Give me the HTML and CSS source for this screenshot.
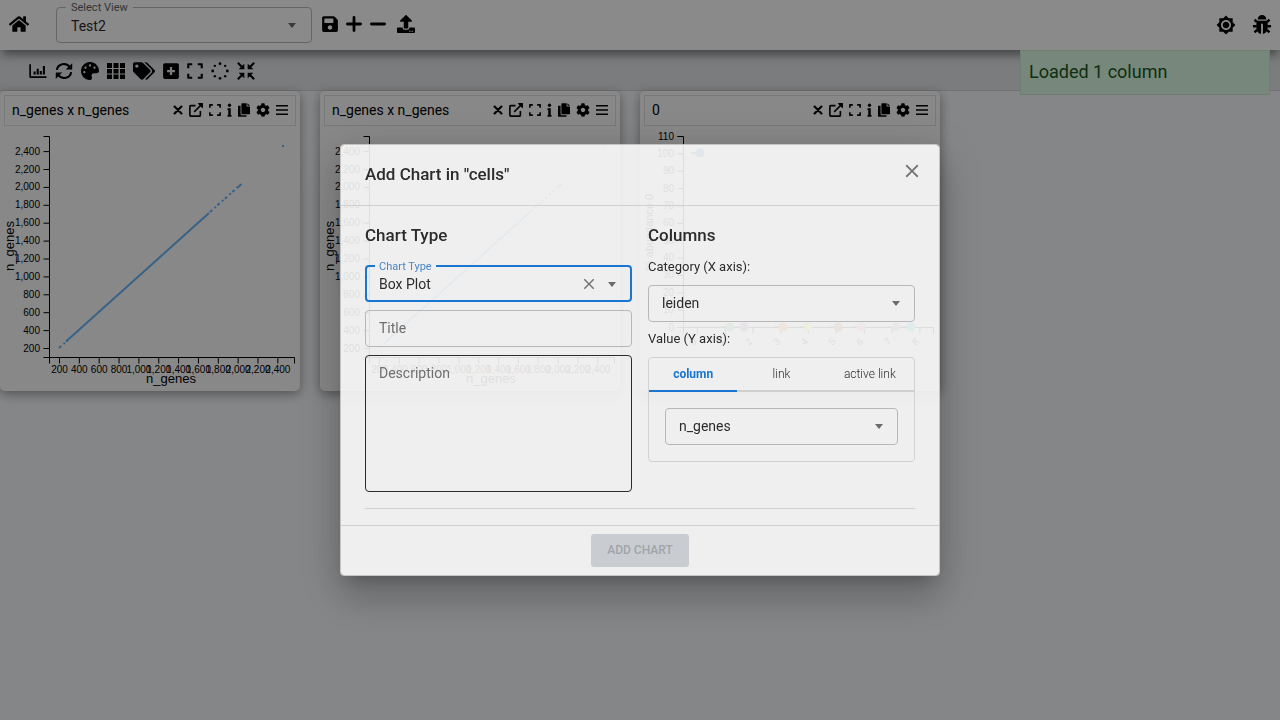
FILE: index.html
```html
<!DOCTYPE html>
<html lang="en">
<head>
<meta charset="utf-8">
<title>Test2</title>
<link rel="stylesheet" href="styles.css">
</head>
<body>
<svg class="sprite" aria-hidden="true">
  <symbol id="home" viewBox="0 0 576 512"><path d="M280.37 148.26L96 300.11V464a16 16 0 0 0 16 16l112.06-.29a16 16 0 0 0 15.92-16V368a16 16 0 0 1 16-16h64a16 16 0 0 1 16 16v95.64a16 16 0 0 0 16 16.05L464 480a16 16 0 0 0 16-16V300L295.67 148.26a12.19 12.19 0 0 0-15.3 0zM571.6 251.47L488 182.56V44.05a12 12 0 0 0-12-12h-56a12 12 0 0 0-12 12v72.61L318.47 43a48 48 0 0 0-61 0L4.34 251.47a12 12 0 0 0-1.6 16.9l25.5 31A12 12 0 0 0 45.15 301l235.22-193.74a12.19 12.19 0 0 1 15.3 0L530.9 301a12 12 0 0 0 16.9-1.6l25.5-31a12 12 0 0 0-1.7-16.93z"/></symbol>
  <symbol id="save" viewBox="0 0 448 512"><path d="M433.941 129.941l-83.882-83.882A48 48 0 0 0 316.118 32H48C21.49 32 0 53.49 0 80v352c0 26.51 21.49 48 48 48h352c26.51 0 48-21.49 48-48V163.882a48 48 0 0 0-14.059-33.941zM224 416c-35.346 0-64-28.654-64-64 0-35.346 28.654-64 64-64s64 28.654 64 64c0 35.346-28.654 64-64 64zm96-304.52V212c0 6.627-5.373 12-12 12H76c-6.627 0-12-5.373-12-12V108c0-6.627 5.373-12 12-12h228.52c3.183 0 6.235 1.264 8.485 3.515l3.48 3.48A11.996 11.996 0 0 1 320 111.48z"/></symbol>
  <symbol id="plus" viewBox="0 0 448 512"><path class="stroke-heavy" d="M36 256h376M224 68v376"/></symbol>
  <symbol id="minus" viewBox="0 0 448 512"><path class="stroke-heavy" d="M36 256h376"/></symbol>
  <symbol id="upload" viewBox="0 0 512 512"><path d="M296 384h-80c-13.3 0-24-10.7-24-24V192h-87.7c-17.8 0-26.7-21.5-14.1-34.1L242.3 5.7c7.5-7.5 19.8-7.5 27.3 0l152.2 152.2c12.6 12.6 3.7 34.1-14.1 34.1H320v168c0 13.3-10.7 24-24 24zm216-8v112c0 13.3-10.7 24-24 24H24c-13.3 0-24-10.7-24-24V376c0-13.3 10.7-24 24-24h136v8c0 30.9 25.1 56 56 56h80c30.9 0 56-25.1 56-56v-8h136c13.3 0 24 10.7 24 24zm-124 88c0-11-9-20-20-20s-20 9-20 20 9 20 20 20 20-9 20-20zm64 0c0-11-9-20-20-20s-20 9-20 20 9 20 20 20 20-9 20-20z"/></symbol>
  <symbol id="sun" viewBox="0 0 24 24"><path d="M20 8.69V4h-4.69L12 .69 8.69 4H4v4.69L.69 12 4 15.31V20h4.69L12 23.31 15.31 20H20v-4.69L23.31 12 20 8.69zM12 18c-3.31 0-6-2.69-6-6s2.69-6 6-6 6 2.69 6 6-2.69 6-6 6zm0-10c-2.21 0-4 1.79-4 4s1.79 4 4 4 4-1.79 4-4-1.79-4-4-4z"/></symbol>
  <symbol id="bug" viewBox="0 0 512 512"><path d="M144 112a112 112 0 0 1 224 0zM136 144h240q24 0 24 24v168c0 78-56 136-120 144V224h-48v256c-64-8-120-66-120-144V168q0-24 24-24z"/><path class="stroke" d="M120 176L64 120M392 176l56-56M120 288H24M392 288h96M130 380l-66 66M382 380l66 66"/></symbol>
  <symbol id="chart" viewBox="0 0 512 512"><path class="stroke-thin" d="M32 64v352q0 16 16 16h448"/><path class="stroke" d="M160 352v-80M248 352V192M336 352v-96M424 352V112"/></symbol>
  <symbol id="refresh" viewBox="0 0 512 512"><path class="stroke" d="M52 226C78 54 300-6 424 144M460 286C434 458 212 518 88 368"/><path d="M490 32v168q0 16-16 16H306l60-60 64-64zM22 480V312q0-16 16-16h168l-60 60-64 64z"/></symbol>
  <symbol id="palette" viewBox="0 0 512 512"><path d="M204.3 5C104.9 24.4 24.8 104.3 5.2 203.4c-37 187 131.7 326.4 258.8 306.7 41.2-6.4 61.4-54.6 42.5-91.7-23.1-45.4 9.9-98.4 60.9-98.4h79.7c35.8 0 64.8-29.6 64.9-65.3C511.5 97.1 368.1-26.9 204.3 5zM96 320c-17.7 0-32-14.3-32-32s14.3-32 32-32 32 14.3 32 32-14.3 32-32 32zm32-128c-17.7 0-32-14.3-32-32s14.3-32 32-32 32 14.3 32 32-14.3 32-32 32zm128-64c-17.7 0-32-14.3-32-32s14.3-32 32-32 32 14.3 32 32-14.3 32-32 32zm128 64c-17.7 0-32-14.3-32-32s14.3-32 32-32 32 14.3 32 32-14.3 32-32 32z"/></symbol>
  <symbol id="grid" viewBox="0 0 18 18"><path d="M0 1h5v5H0zM6.500 1h5v5h-5zM13 1h5v5h-5zM0 7h5v4.500H0zM6.500 7h5v4.500h-5zM13 7h5v4.500h-5zM0 12.500h5v4.500H0zM6.500 12.500h5v4.500h-5zM13 12.500h5v4.500h-5z"/></symbol>
  <symbol id="tags" viewBox="0 0 640 512"><path d="M497.941 225.941L286.059 14.059A48 48 0 0 0 252.118 0H48C21.49 0 0 21.49 0 48v204.118a48 48 0 0 0 14.059 33.941l211.882 211.882c18.744 18.745 49.136 18.746 67.882 0l204.118-204.118c18.745-18.745 18.745-49.137 0-67.882zM112 160c-26.51 0-48-21.49-48-48s21.49-48 48-48 48 21.49 48 48-21.490 48-48 48zm513.941 133.823L421.823 497.941c-18.745 18.745-49.137 18.745-67.882 0l-.36-.36L527.64 323.522c16.999-16.999 26.362-39.6 26.362-63.64s-9.362-46.641-26.362-63.64L331.397 0h48.721a48 48 0 0 1 33.941 14.059l211.882 211.882c18.745 18.745 18.745 49.137 0 67.882z"/></symbol>
  <symbol id="plus-square" viewBox="0 0 448 512"><path fill-rule="evenodd" d="M48 32h352a48 48 0 0 1 48 48v352a48 48 0 0 1-48 48H48a48 48 0 0 1-48-48V80a48 48 0 0 1 48-48zm144 112v80h-80v64h80v80h64v-80h80v-64h-80v-80z"/></symbol>
  <symbol id="expand" viewBox="0 0 448 512"><path class="stroke" d="M32 176V64h112M304 64h112v112M416 336v112H304M144 448H32V336"/></symbol>
  <symbol id="spinner" viewBox="0 0 512 512"><circle cx="256" cy="48" r="40"/><circle cx="256" cy="464" r="40"/><circle cx="48" cy="256" r="40"/><circle cx="464" cy="256" r="40"/><circle cx="109" cy="109" r="34"/><circle cx="403" cy="109" r="34"/><circle cx="109" cy="403" r="34"/><circle cx="403" cy="403" r="34"/></symbol>
  <symbol id="compress" viewBox="0 0 512 512"><path class="stroke" d="M24 24l140 140M488 24L348 164M24 488l140-140M488 488L348 348"/><path d="M208 48v160H48l50-55 55-55zM304 48v160h160l-50-55-55-55zM208 464V304H48l50 55 55 55zM304 464V304h160l-50 55-55 55z"/></symbol>
  <symbol id="times" viewBox="0 0 352 512"><path class="stroke-heavy" d="M50 130l252 252M302 130L50 382"/></symbol>
  <symbol id="external" viewBox="0 0 512 512"><path class="stroke" d="M240 96H64q-32 0-32 32v320q0 32 32 32h320q32 0 32-32V290M190 322L440 72"/><path d="M320 0h172q20 0 20 20v172l-60-40-92-92z"/></symbol>
  <symbol id="info" viewBox="0 0 192 512"><circle cx="96" cy="72" r="64"/><path d="M20 192h124v256h28v64H20v-64h28V256H20z"/></symbol>
  <symbol id="copy" viewBox="0 0 448 512"><path d="M320 448v40c0 13-11 24-24 24H24c-13 0-24-11-24-24V120c0-13 11-24 24-24h72v296c0 31 25 56 56 56zM320 0v128h128v264c0 13-11 24-24 24H152c-13 0-24-11-24-24V24c0-13 11-24 24-24zM448 96h-96V0z"/></symbol>
  <symbol id="cog" viewBox="0 0 512 512"><path d="M487.4 315.7l-42.6-24.6c4.3-23.2 4.3-47 0-70.2l42.6-24.6c4.900-2.800 7.100-8.600 5.500-14-11.100-35.600-30-67.800-54.700-94.600-3.800-4.100-10-5.100-14.800-2.300L380.800 110c-17.900-15.400-38.500-27.300-60.800-35.100V25.800c0-5.600-3.900-10.500-9.400-11.700-36.700-8.200-74.300-7.800-109.200 0-5.500 1.200-9.400 6.100-9.400 11.700V75c-22.200 7.900-42.800 19.800-60.800 35.100L88.700 85.500c-4.900-2.800-11-1.900-14.800 2.300-24.700 26.700-43.600 58.900-54.700 94.600-1.700 5.400.6 11.200 5.500 14L67.300 221c-4.300 23.200-4.300 47 0 70.200l-42.600 24.600c-4.900 2.800-7.100 8.600-5.500 14 11.100 35.600 30 67.800 54.700 94.600 3.800 4.100 10 5.100 14.800 2.300l42.600-24.600c17.900 15.400 38.500 27.300 60.800 35.100v49.200c0 5.600 3.900 10.500 9.400 11.700 36.700 8.200 74.300 7.800 109.200 0 5.500-1.200 9.400-6.100 9.400-11.700v-49.200c22.200-7.900 42.800-19.800 60.800-35.100l42.600 24.600c4.900 2.800 11 1.900 14.800-2.300 24.700-26.700 43.600-58.900 54.700-94.600 1.500-5.500-.7-11.300-5.600-14.100zM256 336c-44.100 0-80-35.900-80-80s35.900-80 80-80 80 35.900 80 80-35.900 80-80 80z"/></symbol>
  <symbol id="bars" viewBox="0 0 448 512"><path class="stroke" d="M0 96h448M0 256h448M0 416h448"/></symbol>
  <symbol id="clear" viewBox="0 0 24 24"><path d="M19 6.410L17.590 5 12 10.590 6.410 5 5 6.410 10.590 12 5 17.590 6.410 19 12 13.410 17.590 19 19 17.590 13.410 12z"/></symbol>
</svg>

<header class="appbar">
  <button class="icon-btn" aria-label="Home"><svg class="i20"><use href="#home"/></svg></button>
  <fieldset class="notched view-select">
    <legend><label for="view">Select View</label></legend>
    <div class="select-wrap"><select id="view" class="picker"><option>Test2</option></select></div>
  </fieldset>
  <div class="appbar-tools">
    <button class="icon-btn" aria-label="Save"><svg class="i18 w16"><use href="#save"/></svg></button>
    <button class="icon-btn" aria-label="Add view"><svg class="i18 w16"><use href="#plus"/></svg></button>
    <button class="icon-btn" aria-label="Delete view"><svg class="i18 w16"><use href="#minus"/></svg></button>
  </div>
  <button class="icon-btn" aria-label="Upload"><svg class="i18"><use href="#upload"/></svg></button>
  <div class="appbar-end">
    <button class="icon-btn" aria-label="Theme"><svg class="i20"><use href="#sun"/></svg></button>
    <button class="icon-btn" aria-label="Report a bug"><svg class="i20"><use href="#bug"/></svg></button>
  </div>
</header>

<nav class="toolbar" aria-label="Chart tools">
  <button class="icon-btn" aria-label="Add chart"><svg class="i18"><use href="#chart"/></svg></button>
  <button class="icon-btn" aria-label="Reset"><svg class="i18"><use href="#refresh"/></svg></button>
  <button class="icon-btn" aria-label="Colours"><svg class="i18"><use href="#palette"/></svg></button>
  <button class="icon-btn" aria-label="Layout"><svg class="i18"><use href="#grid"/></svg></button>
  <button class="icon-btn" aria-label="Tags"><svg class="i18 w22"><use href="#tags"/></svg></button>
  <button class="icon-btn" aria-label="Add"><svg class="i18 w16"><use href="#plus-square"/></svg></button>
  <button class="icon-btn" aria-label="Fullscreen"><svg class="i18 w16"><use href="#expand"/></svg></button>
  <button class="icon-btn" aria-label="Loading"><svg class="i18"><use href="#spinner"/></svg></button>
  <button class="icon-btn" aria-label="Compress"><svg class="i18"><use href="#compress"/></svg></button>
</nav>

<main class="canvas">
  <section class="panel" data-title="n_genes x n_genes" data-chart="scatter"></section>
  <section class="panel" data-title="n_genes x n_genes" data-chart="scatter"></section>
  <section class="panel" data-title="0" data-chart="abundance"></section>
</main>

<div class="toast" role="status">Loaded 1 column</div>

<div class="backdrop">
  <div class="dialog" role="dialog" aria-labelledby="dialog-title">
    <div class="dialog-head">
      <h2 id="dialog-title">Add Chart in "cells"</h2>
      <button class="icon-btn muted" aria-label="Close"><svg class="i22"><use href="#clear"/></svg></button>
    </div>
    <div class="dialog-body">
      <div class="columns">
        <div class="col fields">
          <h2>Chart Type</h2>
          <fieldset class="notched focused">
            <legend><label for="type">Chart Type</label></legend>
            <div class="combo">
              <input id="type" type="text" value="Box Plot">
              <button class="icon-btn muted" aria-label="Clear"><svg class="i18"><use href="#clear"/></svg></button>
              <button class="icon-btn" aria-label="Open"><span class="caret"></span></button>
            </div>
          </fieldset>
          <input class="box" type="text" placeholder="Title" aria-label="Title">
          <textarea class="box area" placeholder="Description" aria-label="Description"></textarea>
        </div>
        <div class="col params">
          <h2>Columns</h2>
          <label for="category">Category (X axis):</label>
          <div class="select-wrap"><select id="category" class="box picker"><option>leiden</option></select></div>
          <label for="value">Value (Y axis):</label>
          <div class="tabbox">
            <div class="tabs" role="tablist">
              <button class="tab selected" role="tab" aria-selected="true">column</button>
              <button class="tab" role="tab">link</button>
              <button class="tab" role="tab">active link</button>
            </div>
            <div class="tabpanel">
              <div class="select-wrap"><select id="value" class="box picker"><option>n_genes</option></select></div>
            </div>
          </div>
        </div>
      </div>
      <hr>
    </div>
    <div class="dialog-foot"><button class="submit" disabled>ADD CHART</button></div>
  </div>
</div>
<script src="charts.js"></script>
</body>
</html>
```
FILE: styles.css
```css
* { box-sizing: border-box; }
body {
  margin: 0;
  min-height: 100vh;
  display: flex;
  flex-direction: column;
  overflow: hidden;
  background: #f3f5f8;
  color: #000;
  font: 14px/20px Roboto, "Liberation Sans", sans-serif;
}
.sprite { position: absolute; width: 0; height: 0; }
svg { display: block; fill: currentColor; }
.stroke, .stroke-thin, .stroke-heavy { fill: none; stroke: currentColor; stroke-width: 60; stroke-linejoin: round; }
.stroke-thin { stroke-width: 48; }
.stroke-heavy { stroke-width: 80; stroke-linecap: round; }
.icon-btn { display: block; padding: 0; border: 0; background: none; color: inherit; cursor: pointer; }
.muted { color: #757575; }
.i14 { width: 14px; height: 14px; }
.i18 { width: 18px; height: 18px; }
.i20 { width: 20px; height: 20px; }
.i22 { width: 22px; height: 22px; }
.w5 { width: 5px; }
.w10 { width: 10px; }
.w12 { width: 12px; }
.w16 { width: 16px; }
.w22 { width: 22px; }

.appbar {
  display: flex;
  align-items: center;
  height: 50px;
  padding: 0 8px 2px 9px;
  background: #fcfcfc;
  box-shadow: 0 6px 10px -2px rgba(0, 0, 0, .5);
  position: relative;
  z-index: 1;
}
.view-select { width: 256px; margin: -4px 10px 0 27px; }
.appbar-tools { display: flex; gap: 8px; margin-right: 11px; }
.appbar-end { display: flex; gap: 16px; margin-left: auto; padding-top: 2px; }

.notched { min-width: 0; padding: 0 13px 4px 9px; border: 1px solid #b9b9b9; border-radius: 4px; }
.notched legend { padding: 2px 5px 0; color: #5f5f5f; font-size: 11px; line-height: 10px; }
.view-select .picker { width: 100%; height: 25px; padding: 0 5px; }

.toolbar {
  display: flex;
  align-items: center;
  gap: 8px;
  height: 41px;
  padding: 2px 29px 0;
  background: #e0e2e5;
  border-bottom: 1px solid #cfd1d4;
}
.canvas { flex: 1; display: flex; align-items: flex-start; gap: 20px; }
.panel {
  width: 300px;
  padding: 4px 4px 0;
  background: #f8f8f8;
  border-radius: 5px;
  box-shadow: 0 3px 12px rgba(0, 0, 0, .4);
}
.panel-head {
  display: flex;
  align-items: center;
  gap: 6px;
  height: 31px;
  padding: 0 7px 2px;
  border: 1px solid #dcdcdc;
}
.panel-title { flex: 1; }
.plot { width: 300px; height: 265px; margin-left: -4px; font-family: "Liberation Sans", Arial, sans-serif; }
.plot line, .plot polyline { fill: none; stroke: #000; }
.plot text { font-size: 10px; fill: #000; }
.plot .axis-title { font-size: 13px; text-anchor: middle; }
.plot .side-title { font-size: 11px; text-anchor: middle; }
.plot .points { stroke: #66b2f5; stroke-width: 2; }
.plot .sparse { stroke-dasharray: 3 3 2 2; }
.plot .tick-y { text-anchor: end; }
.plot .tick-x { text-anchor: middle; }
.plot .tick-tilt { text-anchor: end; }

.toast {
  position: absolute;
  top: 50px;
  right: 10px;
  z-index: 2;
  width: 250px;
  padding: 8px 8px 10px;
  border: 1px solid #c8ead0;
  background: #dbf6e1;
  color: #155724;
  font-size: 18px;
  line-height: 25px;
}

.backdrop {
  position: fixed;
  inset: 0;
  z-index: 3;
  display: flex;
  align-items: center;
  justify-content: center;
  background: rgba(0, 0, 0, .45);
}
.dialog {
  width: 600px;
  max-width: 100%;
  border: 1px solid #c4c4c4;
  border-radius: 4px;
  background: rgba(253, 253, 253, .88);
  background-clip: padding-box;
  box-shadow: 0 11px 15px -7px rgba(0, 0, 0, .2), 0 24px 38px 3px rgba(0, 0, 0, .14), 0 9px 46px 8px rgba(0, 0, 0, .12);
  color: #2c2c2c;
}
.dialog h2 { margin: 0; font-size: 17px; font-weight: 500; line-height: 24px; }
.dialog-head {
  display: flex;
  align-items: flex-start;
  justify-content: space-between;
  padding: 15px 16px 19px 24px;
  border-bottom: 1px solid #d0d0d0;
}
.dialog-head h2 { padding-top: 2px; }
.dialog-body { padding: 17px 24px 16px; }
.dialog hr { margin: 16px 0 0; border: 0; border-top: 1px solid #d0d0d0; }
.columns { display: flex; gap: 16px; }
.col { flex: 1; min-width: 0; display: flex; flex-direction: column; }
.fields { gap: 8px; }
.fields h2 { margin-bottom: 5px; }
.focused { margin: 0; border: 2px solid #1976d2; padding: 0 8px 4px; }
.focused legend { padding: 2px 4px 0; color: #4a86c8; }
.combo { display: flex; align-items: center; gap: 10px; padding: 0 6px 0 4px; }
.combo input { flex: 1; min-width: 0; height: 24px; padding: 0; border: 0; outline: 0; background: none; color: inherit; font: inherit; }
.box {
  width: 100%;
  height: 37px;
  padding: 0 13px 2px;
  border: 1px solid #b7b7b7;
  border-radius: 4px;
  background: none;
  color: inherit;
  font: inherit;
}
.box::placeholder { color: #6f6f6f; opacity: 1; }
.area { height: 137px; padding: 7px 13px; border-color: #2c2c2c; resize: none; }
.caret, .select-wrap::after { display: block; border: 4px solid transparent; border-top: 5px solid #6b6b6b; border-bottom: 0; }
.select-wrap { display: grid; align-items: center; }
.select-wrap > select, .select-wrap::after { grid-area: 1 / 1; }
.select-wrap::after { content: ""; justify-self: end; margin-right: 15px; pointer-events: none; }
.view-select .select-wrap::after { margin-right: 2px; }
.picker { appearance: none; border: 0; background: none; color: #2c2c2c; font: inherit; }
.picker.box { border: 1px solid #b7b7b7; }
.params label { margin-top: 10px; font-size: 13px; line-height: 20px; }
.params > .select-wrap { margin-top: 8px; }
.params > .select-wrap + label { margin-top: 7px; }
.tabbox { margin-top: 8px; border: 1px solid #d2d2d2; border-radius: 4px; }
.tabs { display: grid; grid-template-columns: repeat(3, 1fr); }
.tab {
  height: 34px;
  padding: 0;
  border: 0;
  border-bottom: 2px solid #d0d0d0;
  background: none;
  color: #2c2c2c;
  font: 300 12px/16px Roboto, sans-serif;
}
.tab.selected { border-color: #1976d2; color: #1976d2; font-weight: 700; }
.tabpanel { padding: 16px; }
.dialog-foot { display: flex; justify-content: center; padding: 8px; border-top: 1px solid #d0d0d0; }
.submit {
  height: 33px;
  padding: 0 16px 2px;
  border: 0;
  border-radius: 3px;
  background: #c9cdd2;
  color: #a0a4a7;
  font: 500 12px/16px Roboto, sans-serif;
}
```
FILE: charts.js
```js
const actions = [
  ['Close', 'times', 'w10'], ['Pop out', 'external', ''], ['Fullscreen', 'expand', 'w12'],
  ['Info', 'info', 'w5'], ['Copy', 'copy', 'w12'], ['Settings', 'cog', ''], ['Menu', 'bars', 'w12']
];

function line(x1, y1, x2, y2, cls = '') {
  return `<line class="${cls}" x1="${x1}" y1="${y1}" x2="${x2}" y2="${y2}"/>`;
}

function scatter() {
  let out = '<polyline points="43.5,10.5 49.5,10.5 49.5,231.5 43.5,231.5"/>';
  out += '<polyline points="49.5,237.5 49.5,231.5 294.5,231.5 294.5,237.5"/>';
  for (let i = 0; i < 12; i++) {
    const label = (200 + i * 200).toLocaleString('en-US');
    const x = 59.5 + i * 19.85;
    const y = 222.5 - i * 17.9;
    out += line(x, 232, x, 237.5) + `<text class="tick-x" x="${x}" y="247">${label}</text>`;
    out += line(43.5, y, 49, y) + `<text class="tick-y" x="40" y="${y + 3}">${label}</text>`;
  }
  out += line(59, 222, 68, 214, 'points sparse') + line(66, 215.5, 209, 87, 'points');
  out += line(210, 86, 238, 61, 'points sparse') + line(237, 62, 241.5, 58, 'points') + line(282, 20, 284, 20, 'points');
  out += '<text class="axis-title" x="171" y="257">n_genes</text>';
  out += '<text class="axis-title" transform="translate(14 120) rotate(-90)">n_genes</text>';
  return out;
}

function abundance() {
  let out = '<polyline points="37.5,10.5 43.5,10.5 43.5,201.5 37.5,201.5"/>';
  out += '<polyline points="43.5,207.5 43.5,201.5 293.5,201.5 293.5,207.5"/>';
  for (let i = 0; i <= 11; i++) {
    const y = 201.5 - i * 17.36;
    out += line(37.5, y, 43, y) + `<text class="tick-y" x="34" y="${y + 3}">${i * 10}</text>`;
  }
  for (let i = 0; i <= 8; i++) {
    const x = 57.5 + i * 27.8;
    out += line(x, 202, x, 207.5) + `<text class="tick-tilt" transform="translate(${x} 216) rotate(-45)">${i}</text>`;
  }
  const dots = [[60, 27, '#2f80c8'], [90, 201, '#4daf4a'], [104, 201, '#984ea3'], [143, 201, '#ff7f00'],
    [168, 201, '#e6e62e'], [198, 201, '#a65628'], [221, 201, '#f781bf'], [256, 201, '#999'], [271, 201, '#17d0e0']];
  for (const [x, y, color] of dots) {
    out += line(x - 9, y, x + 4, y) + line(x, y - 3, x, y + 3) + `<circle cx="${x}" cy="${y}" r="4.5" fill="${color}"/>`;
  }
  out += '<text class="side-title" transform="translate(13 106) rotate(-90)">% abundance 0</text>';
  return out;
}

const charts = { scatter, abundance };
document.querySelectorAll('.panel').forEach(panel => {
  const buttons = actions.map(([name, icon, width]) =>
    `<button class="icon-btn" aria-label="${name}"><svg class="i14 ${width}"><use href="#${icon}"/></svg></button>`).join('');
  panel.innerHTML = `<div class="panel-head"><span class="panel-title">${panel.dataset.title}</span>${buttons}</div>` +
    `<svg class="plot" viewBox="0 0 300 265">${charts[panel.dataset.chart]()}</svg>`;
});
```
